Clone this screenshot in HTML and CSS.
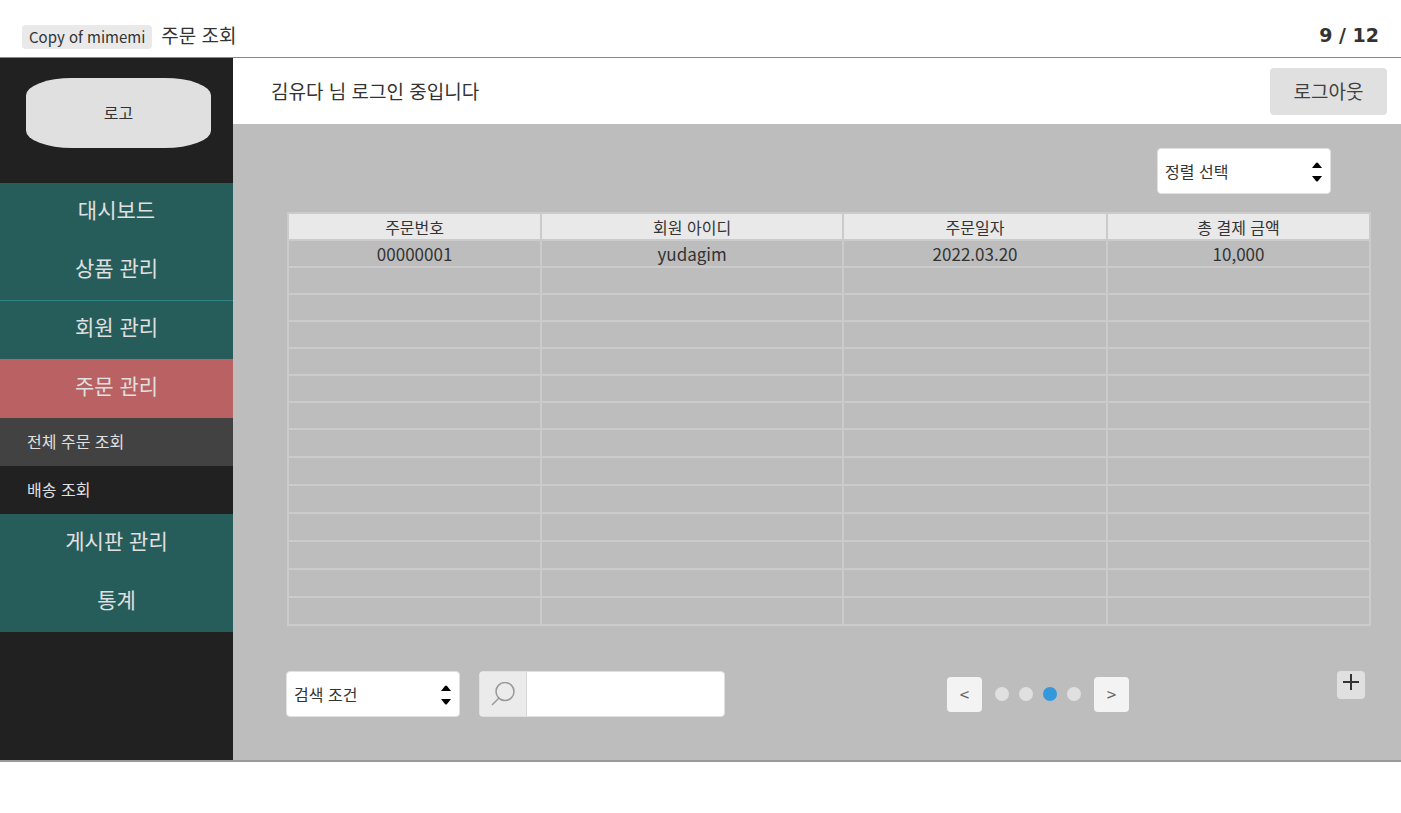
FILE: index.html
```html
<!DOCTYPE html>
<html lang="ko">
<head>
<meta charset="utf-8">
<title>주문 조회</title>
<link rel="stylesheet" href="styles.css">
</head>
<body>
<header class="topbar">
  <div class="crumbs"><span class="tag">Copy of mimemi</span><h1 class="title">주문 조회</h1></div>
  <span class="page-count">9 / 12</span>
</header>
<div class="frame">
  <aside class="sidebar">
    <a class="logo" href="#">로고</a>
    <nav class="menu">
      <a class="menu-item" href="#">대시보드</a>
      <a class="menu-item menu-item-short" href="#">상품 관리</a>
      <a class="menu-item menu-item-ruled" href="#">회원 관리</a>
      <a class="menu-item menu-item-active" href="#">주문 관리</a>
      <a class="sub-item sub-item-active" href="#">전체 주문 조회</a>
      <a class="sub-item" href="#">배송 조회</a>
      <a class="menu-item" href="#">게시판 관리</a>
      <a class="menu-item" href="#">통계</a>
    </nav>
  </aside>
  <div class="content">
    <div class="userbar">
      <span>김유다 님 로그인 중입니다</span>
      <button class="logout" type="button">로그아웃</button>
    </div>
    <main class="main">
      <div class="sort-row">
        <div class="picker">
          <select class="select" aria-label="정렬 선택"><option>정렬 선택</option></select>
          <svg class="arrows" viewBox="0 0 10 20" aria-hidden="true"><path d="M0 6 4 1Q5 0 6 1L10 6ZM0 14H10L6 19Q5 20 4 19Z"/></svg>
        </div>
      </div>
      <table class="orders">
        <colgroup><col class="col-number"><col class="col-member"><col class="col-date"><col></colgroup>
        <thead><tr><th>주문번호</th><th>회원 아이디</th><th>주문일자</th><th>총 결제 금액</th></tr></thead>
        <tbody>
          <tr><td>00000001</td><td>yudagim</td><td>2022.03.20</td><td>10,000</td></tr>
          <tr><td></td><td></td><td></td><td></td></tr>
          <tr><td></td><td></td><td></td><td></td></tr>
          <tr><td></td><td></td><td></td><td></td></tr>
          <tr><td></td><td></td><td></td><td></td></tr>
          <tr><td></td><td></td><td></td><td></td></tr>
          <tr><td></td><td></td><td></td><td></td></tr>
        </tbody>
        <tbody class="tall">
          <tr><td></td><td></td><td></td><td></td></tr>
          <tr><td></td><td></td><td></td><td></td></tr>
          <tr><td></td><td></td><td></td><td></td></tr>
          <tr><td></td><td></td><td></td><td></td></tr>
          <tr><td></td><td></td><td></td><td></td></tr>
          <tr><td></td><td></td><td></td><td></td></tr>
          <tr><td></td><td></td><td></td><td></td></tr>
        </tbody>
      </table>
      <div class="tools">
        <div class="picker">
          <select class="select" aria-label="검색 조건"><option>검색 조건</option></select>
          <svg class="arrows" viewBox="0 0 10 20" aria-hidden="true"><path d="M0 6 4 1Q5 0 6 1L10 6ZM0 14H10L6 19Q5 20 4 19Z"/></svg>
        </div>
        <form class="search">
          <button class="search-button" type="button" aria-label="검색"><svg class="search-icon" viewBox="0 0 24 24" aria-hidden="true"><circle cx="14" cy="9.5" r="9"/><path d="M8 16 1 23"/></svg></button>
          <input class="search-input" type="text" aria-label="검색어">
        </form>
        <div class="pager">
          <button class="step" type="button" aria-label="이전">&lt;</button>
          <div class="dots">
            <button class="dot" type="button" aria-label="1"></button>
            <button class="dot" type="button" aria-label="2"></button>
            <button class="dot dot-active" type="button" aria-label="3"></button>
            <button class="dot" type="button" aria-label="4"></button>
          </div>
          <button class="step" type="button" aria-label="다음">&gt;</button>
        </div>
        <button class="add" type="button" aria-label="추가"><svg class="plus" viewBox="0 0 16 16" aria-hidden="true"><path d="M0 8H16M8 0V16"/></svg></button>
      </div>
    </main>
  </div>
</div>
</body>
</html>
```
FILE: styles.css
```css
* { box-sizing: border-box; }
body {
  margin: 0;
  background: #fff;
  color: #333;
  font: 16px/24px "Noto Sans CJK KR", sans-serif;
}
a { color: inherit; text-decoration: none; }
button, input, select { font: inherit; color: inherit; border: 0; margin: 0; padding: 0; }
.topbar {
  display: flex;
  justify-content: space-between;
  align-items: flex-end;
  height: 58px;
  padding: 0 22px 8px;
  border-bottom: 1px solid #888;
}
.crumbs { display: flex; gap: 9px; align-items: flex-end; }
.tag { padding: 0 7px; border-radius: 4px; background: #e9e9e9; font-size: 15px; }
.title { margin: 0; font-size: 19px; line-height: 28px; font-weight: 400; }
.page-count { font: bold 19px/28px "DejaVu Sans", sans-serif; }
.frame { display: flex; border-bottom: 2px solid #999; }
.sidebar { flex: none; width: 233px; background: #212121; color: #e0e0e0; }
.logo {
  display: flex;
  align-items: center;
  justify-content: center;
  height: 70px;
  margin: 20px 22px 35px 26px;
  padding-bottom: 2px;
  border-radius: 25%;
  background: #e0e0e0;
  color: #333;
}
.menu { display: flex; flex-direction: column; }
.menu-item {
  display: flex;
  align-items: center;
  justify-content: center;
  height: 59px;
  padding-bottom: 8px;
  background: #265d5b;
  font-size: 21px;
}
.menu-item-short { height: 58px; }
.menu-item-ruled { border-top: 1px solid #2f8580; }
.menu-item-active { background: #b96163; }
.sub-item { display: flex; align-items: center; height: 48px; padding: 0 27px 2px; }
.sub-item-active { background: #424242; }
.content { flex: 1; min-width: 0; display: flex; flex-direction: column; }
.userbar {
  display: flex;
  justify-content: space-between;
  align-items: center;
  height: 66px;
  padding: 0 14px 0 38px;
  font-size: 19px;
}
.logout { width: 117px; height: 47px; border-radius: 4px; background: #e0e0e0; color: #404040; }
.main { flex: 1; padding: 24px 30px 43px 53px; background: #bdbdbd; }
.sort-row { display: flex; justify-content: flex-end; padding: 0 40px 0 0; }
.picker { position: relative; width: 174px; }
.select {
  appearance: none;
  display: block;
  width: 100%;
  height: 46px;
  padding: 0 7px;
  border: 1px solid #e0e0e0;
  border-radius: 4px;
  background: #fff;
}
.arrows { position: absolute; right: 9px; top: 14px; width: 10px; height: 20px; fill: #000; pointer-events: none; }
.orders {
  width: calc(100% - 1px);
  margin: 18px 0 45px 1px;
  border-collapse: collapse;
  table-layout: fixed;
  text-align: center;
}
.col-number { width: 23.4%; }
.col-member { width: 27.9%; }
.col-date { width: 24.4%; }
.orders th, .orders td { height: 27px; padding: 0; border: 2px solid #cbcbcb; font-weight: 400; }
.orders th { background: #e9e9e9; }
.orders td { font-size: 17px; }
.orders .tall td { height: 28px; }
.tools { display: flex; align-items: center; }
.search {
  display: flex;
  width: 246px;
  height: 46px;
  margin-left: 19px;
  border: 1px solid #e0e0e0;
  border-radius: 4px;
  background: #fff;
  overflow: hidden;
}
.search-button { display: flex; align-items: center; justify-content: center; width: 47px; border-right: 1px solid #d6d6d6; background: #ebebeb; }
.search-icon { width: 24px; height: 24px; fill: none; stroke: #999; stroke-width: 1.5; }
.search-input { flex: 1; min-width: 0; padding: 0 8px; background: transparent; }
.pager { display: flex; align-items: center; gap: 13px; margin-left: auto; }
.step { width: 35px; height: 35px; border-radius: 4px; background: #f3f3f3; color: #666; font-size: 17px; }
.dots { display: flex; gap: 10px; }
.dot { width: 14px; height: 14px; border-radius: 50%; background: #e0e0e0; }
.dot-active { background: #3498db; }
.add {
  display: flex;
  justify-content: center;
  align-self: flex-start;
  width: 28px;
  height: 28px;
  margin: 0 6px 0 208px;
  padding-top: 3px;
  border-radius: 4px;
  background: #e0e0e0;
}
.plus { width: 16px; height: 16px; stroke: #333; stroke-width: 2; }
```
